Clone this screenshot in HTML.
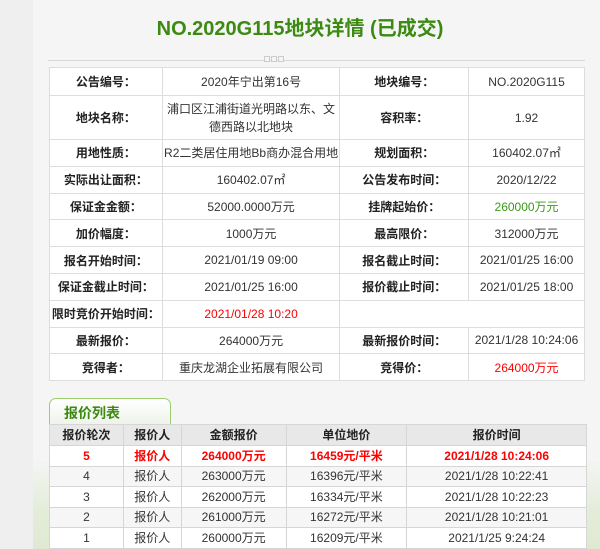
<!DOCTYPE html>
<html><head><meta charset="utf-8"><style>
*{margin:0;padding:0;box-sizing:border-box}
html,body{width:600px;height:549px;overflow:hidden}
body{background:#eeefee;font-family:"Liberation Sans","Noto Sans CJK SC",sans-serif;position:relative}
.panel{position:absolute;left:33px;top:0;width:567px;height:549px;background:#f4f5f4}
.hill{position:absolute;left:33px;top:460px;width:567px;height:89px;background:linear-gradient(180deg,#f4f5f4 0%,#e3ecd8 60%,#dfe9d2 100%)}
h1{position:absolute;left:0;top:12px;width:600px;text-align:center;font-size:20px;color:#3d8a12;font-weight:bold}
.line{position:absolute;left:48px;top:60px;width:537px;height:1px;background:#d8d8d8}
.sq{position:absolute;top:56px;width:6px;height:6px;border:1px solid #ccc;background:#f4f5f4}
table{position:absolute;border-collapse:collapse;background:#fff;font-size:12px;color:#333}
td,th{border:1px solid #ddd;text-align:center;padding:0}
#t1{left:49px;top:67px;width:536px}
#t1 td{height:26.8px}
#t1 td.l{font-weight:bold;color:#222}
#t2{left:49px;top:424px;width:538px}
#t2 th{height:21px;background:#e8e8e8;font-size:12px;color:#222;border:1px solid #d6d6d6;line-height:19px}
#t2 td{height:20.5px;border:1px solid #d6d6d6;line-height:18px}
#t2 tr:nth-child(odd) td{background:#f6f6f6}
.red{color:#f00}.g{color:#3a9a1a}
.rb td{color:#f00!important;font-weight:bold;background:#fff!important}
.tab{position:absolute;left:49px;top:398px;width:122px;height:27px;border:1px solid #9ccf6b;border-bottom:none;border-radius:7px 7px 0 0;background:linear-gradient(#fff,#eef3ea);font-size:14px;color:#3d8a12;padding:4px 0 0 14px;font-weight:bold}
</style></head><body>
<div class="panel"></div><div class="hill"></div>
<h1>NO.2020G115地块详情 (已成交)</h1>
<div class="line"></div>
<div class="sq" style="left:264px"></div><div class="sq" style="left:271px"></div><div class="sq" style="left:278px"></div>
<table id="t1">
<colgroup><col style="width:113px"><col style="width:178px"><col style="width:129px"><col style="width:116px"></colgroup>
<tr><td class="l" style="height:28px">公告编号：</td><td>2020年宁出第16号</td><td class="l">地块编号：</td><td>NO.2020G115</td></tr>
<tr><td class="l" style="height:44px">地块名称：</td><td style="line-height:18px">浦口区江浦街道光明路以东、文<br>德西路以北地块</td><td class="l">容积率：</td><td>1.92</td></tr>
<tr><td class="l">用地性质：</td><td>R2二类居住用地Bb商办混合用地</td><td class="l">规划面积：</td><td>160402.07㎡</td></tr>
<tr><td class="l">实际出让面积：</td><td>160402.07㎡</td><td class="l">公告发布时间：</td><td>2020/12/22</td></tr>
<tr><td class="l">保证金金额：</td><td>52000.0000万元</td><td class="l">挂牌起始价：</td><td class="g">260000万元</td></tr>
<tr><td class="l">加价幅度：</td><td>1000万元</td><td class="l">最高限价：</td><td>312000万元</td></tr>
<tr><td class="l">报名开始时间：</td><td>2021/01/19 09:00</td><td class="l">报名截止时间：</td><td>2021/01/25 16:00</td></tr>
<tr><td class="l">保证金截止时间：</td><td>2021/01/25 16:00</td><td class="l">报价截止时间：</td><td>2021/01/25 18:00</td></tr>
<tr><td class="l">限时竞价开始时间：</td><td class="red">2021/01/28 10:20</td><td colspan="2"></td></tr>
<tr><td class="l">最新报价：</td><td>264000万元</td><td class="l">最新报价时间：</td><td>2021/1/28 10:24:06</td></tr>
<tr><td class="l">竞得者：</td><td>重庆龙湖企业拓展有限公司</td><td class="l">竞得价：</td><td class="red">264000万元</td></tr>
</table>
<div class="tab">报价列表</div>
<table id="t2">
<colgroup><col style="width:74px"><col style="width:58px"><col style="width:105px"><col style="width:121px"><col style="width:180px"></colgroup>
<tr><th>报价轮次</th><th>报价人</th><th>金额报价</th><th>单位地价</th><th>报价时间</th></tr>
<tr class="rb"><td>5</td><td>报价人</td><td>264000万元</td><td>16459元/平米</td><td>2021/1/28 10:24:06</td></tr>
<tr><td>4</td><td>报价人</td><td>263000万元</td><td>16396元/平米</td><td>2021/1/28 10:22:41</td></tr>
<tr><td>3</td><td>报价人</td><td>262000万元</td><td>16334元/平米</td><td>2021/1/28 10:22:23</td></tr>
<tr><td>2</td><td>报价人</td><td>261000万元</td><td>16272元/平米</td><td>2021/1/28 10:21:01</td></tr>
<tr><td>1</td><td>报价人</td><td>260000万元</td><td>16209元/平米</td><td>2021/1/25 9:24:24</td></tr>
</table>
</body></html>
